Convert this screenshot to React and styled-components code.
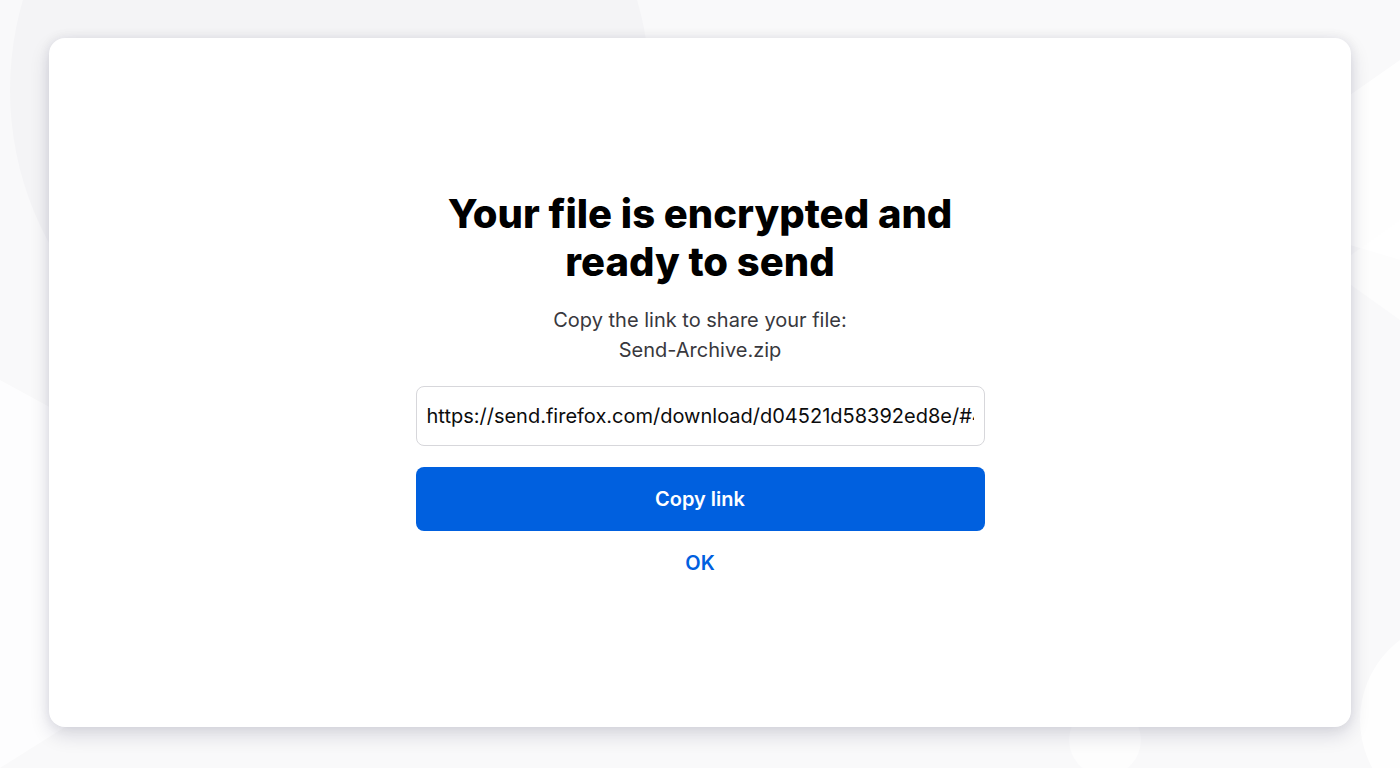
import React from 'react';
import styled, { createGlobalStyle } from 'styled-components';

const GlobalStyle = createGlobalStyle`
  html, body {
    margin: 0;
    padding: 0;
    height: 100%;
    background: #f9f9fa;
    font-family: "Inter", "Noto Sans", sans-serif;
    -webkit-font-smoothing: antialiased;
  }
  #root {
    height: 100%;
  }
`;

const Page = styled.div`
  position: relative;
  height: 768px;
  box-sizing: border-box;
  padding: 38px 49px 41px 49px;
  overflow: hidden;
`;

const Backdrop = styled.svg`
  position: absolute;
  inset: 0;
  width: 100%;
  height: 100%;
  z-index: 0;
`;

const Card = styled.main`
  position: relative;
  z-index: 1;
  height: 100%;
  background: #ffffff;
  border-radius: 16px;
  box-shadow: 0 8px 20px rgba(12, 12, 60, 0.14), 0 0 12px rgba(12, 12, 60, 0.07);
  display: flex;
  align-items: center;
  justify-content: center;
`;

const Content = styled.section`
  width: 569px;
  display: flex;
  flex-direction: column;
  align-items: center;
  text-align: center;
  margin-top: -1px;
`;

const Title = styled.h1`
  margin: 0;
  font-size: 40px;
  line-height: 48px;
  font-weight: 800;
  color: #000000;
  white-space: nowrap;
`;

const Lead = styled.p`
  margin: 19px 0 0;
  font-size: 20px;
  line-height: 30px;
  font-weight: 400;
  color: #38383d;
`;

const LinkField = styled.input`
  box-sizing: border-box;
  width: 100%;
  height: 60px;
  margin-top: 21px;
  padding: 0 10px;
  border: 1px solid #d7d7db;
  border-radius: 8px;
  font-family: inherit;
  font-size: 20px;
  color: #0c0c0d;
  background: #fff;
  outline: none;
`;

const PrimaryButton = styled.button`
  width: 100%;
  height: 64px;
  margin-top: 21px;
  border: none;
  border-radius: 8px;
  background: #0060df;
  color: #fff;
  font-family: inherit;
  font-size: 20px;
  font-weight: 600;
  cursor: pointer;
`;

const TextButton = styled.button`
  margin-top: 20px;
  border: none;
  background: none;
  padding: 0;
  color: #0060df;
  font-family: inherit;
  font-size: 20px;
  line-height: 24px;
  font-weight: 600;
  cursor: pointer;
`;

export default function App() {
  return (
    <>
      <GlobalStyle />
      <Page>
        <Backdrop viewBox="0 0 1400 768" preserveAspectRatio="none">
          <circle cx="330" cy="90" r="320" fill="#f4f4f6" />
          <polygon points="0,380 330,560 0,768" fill="#ffffff" opacity="0.7" />
          <polygon points="1400,60 1200,200 1400,260" fill="#ffffff" opacity="0.8" />
          <polygon points="1400,220 1330,270 1400,320" fill="#ffffff" opacity="0.6" />
          <circle cx="1460" cy="720" r="100" fill="#ffffff" opacity="0.8" />
          <circle cx="1105" cy="740" r="36" fill="#ffffff" opacity="0.6" />
        </Backdrop>
        <Card>
          <Content>
            <Title>
              Your file is encrypted and
              <br />
              ready to send
            </Title>
            <Lead>
              Copy the link to share your file:
              <br />
              Send-Archive.zip
            </Lead>
            <LinkField
              readOnly
              value="https://send.firefox.com/download/d04521d58392ed8e/#4Vt3k5Qm1sEYrHUdXw2a"
            />
            <PrimaryButton>Copy link</PrimaryButton>
            <TextButton>OK</TextButton>
          </Content>
        </Card>
      </Page>
    </>
  );
}
